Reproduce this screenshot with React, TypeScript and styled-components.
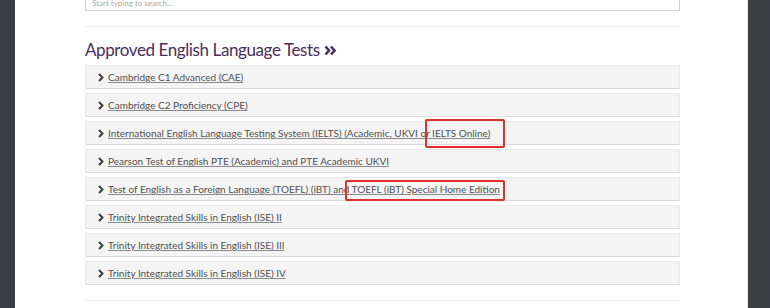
import React from "react";
import styled, { createGlobalStyle } from "styled-components";

const Global = createGlobalStyle`
  html, body { margin: 0; padding: 0; background: #3b3f44; overflow: hidden; }
  body { font-family: Lato, "Open Sans", sans-serif; }
`;

const Shell = styled.div`
  display: flex;
  height: 308px;
`;

const Main = styled.main`
  width: 733px;
  margin-left: 15px;
  background: #ffffff;
  border-right: 1px solid #e8e8e8;
  box-sizing: border-box;
`;

const Content = styled.div`
  position: relative;
  width: 595px;
  margin-left: 70px;
  margin-top: -13px;
  display: flex;
  flex-direction: column;
`;

const SearchInput = styled.input`
  box-sizing: border-box;
  height: 24px;
  width: 100%;
  border: 1px solid #d0d0d0;
  padding: 8px 6px 0 6px;
  font-family: Lato, sans-serif;
  font-size: 8px;
  color: #999;
  outline: none;
  &::placeholder { color: #a8a8a8; }
`;

const Rule = styled.hr<{ $top: number }>`
  border: none;
  border-top: 1px solid #ececec;
  margin: ${(p) => p.$top}px 0 0 0;
  width: 100%;
`;

const Heading = styled.h2`
  margin: 12px 0 0 0;
  font-family: Lato, sans-serif;
  font-weight: 400;
  font-size: 17px;
  line-height: 22px;
  color: #4a2e59;
  letter-spacing: -0.4px;
  display: flex;
  align-items: center;
  gap: 4px;
`;

const List = styled.ul`
  list-style: none;
  margin: 4px 0 0 0;
  padding: 0;
  display: flex;
  flex-direction: column;
  gap: 4px;
`;

const Row = styled.li`
  box-sizing: border-box;
  height: 24px;
  background: #f4f4f4;
  border: 1px solid #e9e9e9;
  border-bottom-color: #dcdcdc;
  display: flex;
  align-items: center;
  padding-left: 12px;
  gap: 4px;
`;

const RowLink = styled.a`
  font-family: Lato, sans-serif;
  font-size: 10px;
  color: #505050;
  text-decoration: underline;
  text-decoration-color: #8a8a8a;
  text-underline-offset: 1px;
  white-space: nowrap;
`;

const Mark = styled.div<{ $l: number; $t: number; $w: number; $h: number }>`
  position: absolute;
  left: ${(p) => p.$l}px;
  top: ${(p) => p.$t}px;
  width: ${(p) => p.$w}px;
  height: ${(p) => p.$h}px;
  border: 2px solid #e0322c;
  border-radius: 2px;
  box-sizing: border-box;
  pointer-events: none;
`;

const Chevron = () => (
  <svg width="6" height="9" viewBox="0 0 6 9" aria-hidden>
    <polyline points="1,1 4.5,4.5 1,8" fill="none" stroke="#333" strokeWidth="1.8" />
  </svg>
);

const DoubleChevron = () => (
  <svg width="13" height="11" viewBox="0 0 13 11" aria-hidden>
    <polyline points="1.5,1.5 5,5.5 1.5,9.5" fill="none" stroke="#4a2e59" strokeWidth="2.6" />
    <polyline points="7,1.5 10.5,5.5 7,9.5" fill="none" stroke="#4a2e59" strokeWidth="2.6" />
  </svg>
);

const tests = [
  "Cambridge C1 Advanced (CAE)",
  "Cambridge C2 Proficiency (CPE)",
  "International English Language Testing System (IELTS) (Academic, UKVI or IELTS Online)",
  "Pearson Test of English PTE (Academic) and PTE Academic UKVI",
  "Test of English as a Foreign Language (TOEFL) (iBT) and TOEFL (iBT) Special Home Edition",
  "Trinity Integrated Skills in English (ISE) II",
  "Trinity Integrated Skills in English (ISE) III",
  "Trinity Integrated Skills in English (ISE) IV",
];

export default function App() {
  return (
    <>
      <Global />
      <Shell>
        <Main>
          <Content>
            <SearchInput placeholder="Start typing to search..." />
            <Rule $top={15} />
            <Heading>
              Approved English Language Tests <DoubleChevron />
            </Heading>
            <List>
              {tests.map((t) => (
                <Row key={t}>
                  <Chevron />
                  <RowLink href="#">{t}</RowLink>
                </Row>
              ))}
            </List>
            <Rule $top={15} />
            <Mark $l={340} $t={132} $w={80} $h={29} />
            <Mark $l={260} $t={193} $w={160} $h={21} />
          </Content>
        </Main>
      </Shell>
    </>
  );
}
